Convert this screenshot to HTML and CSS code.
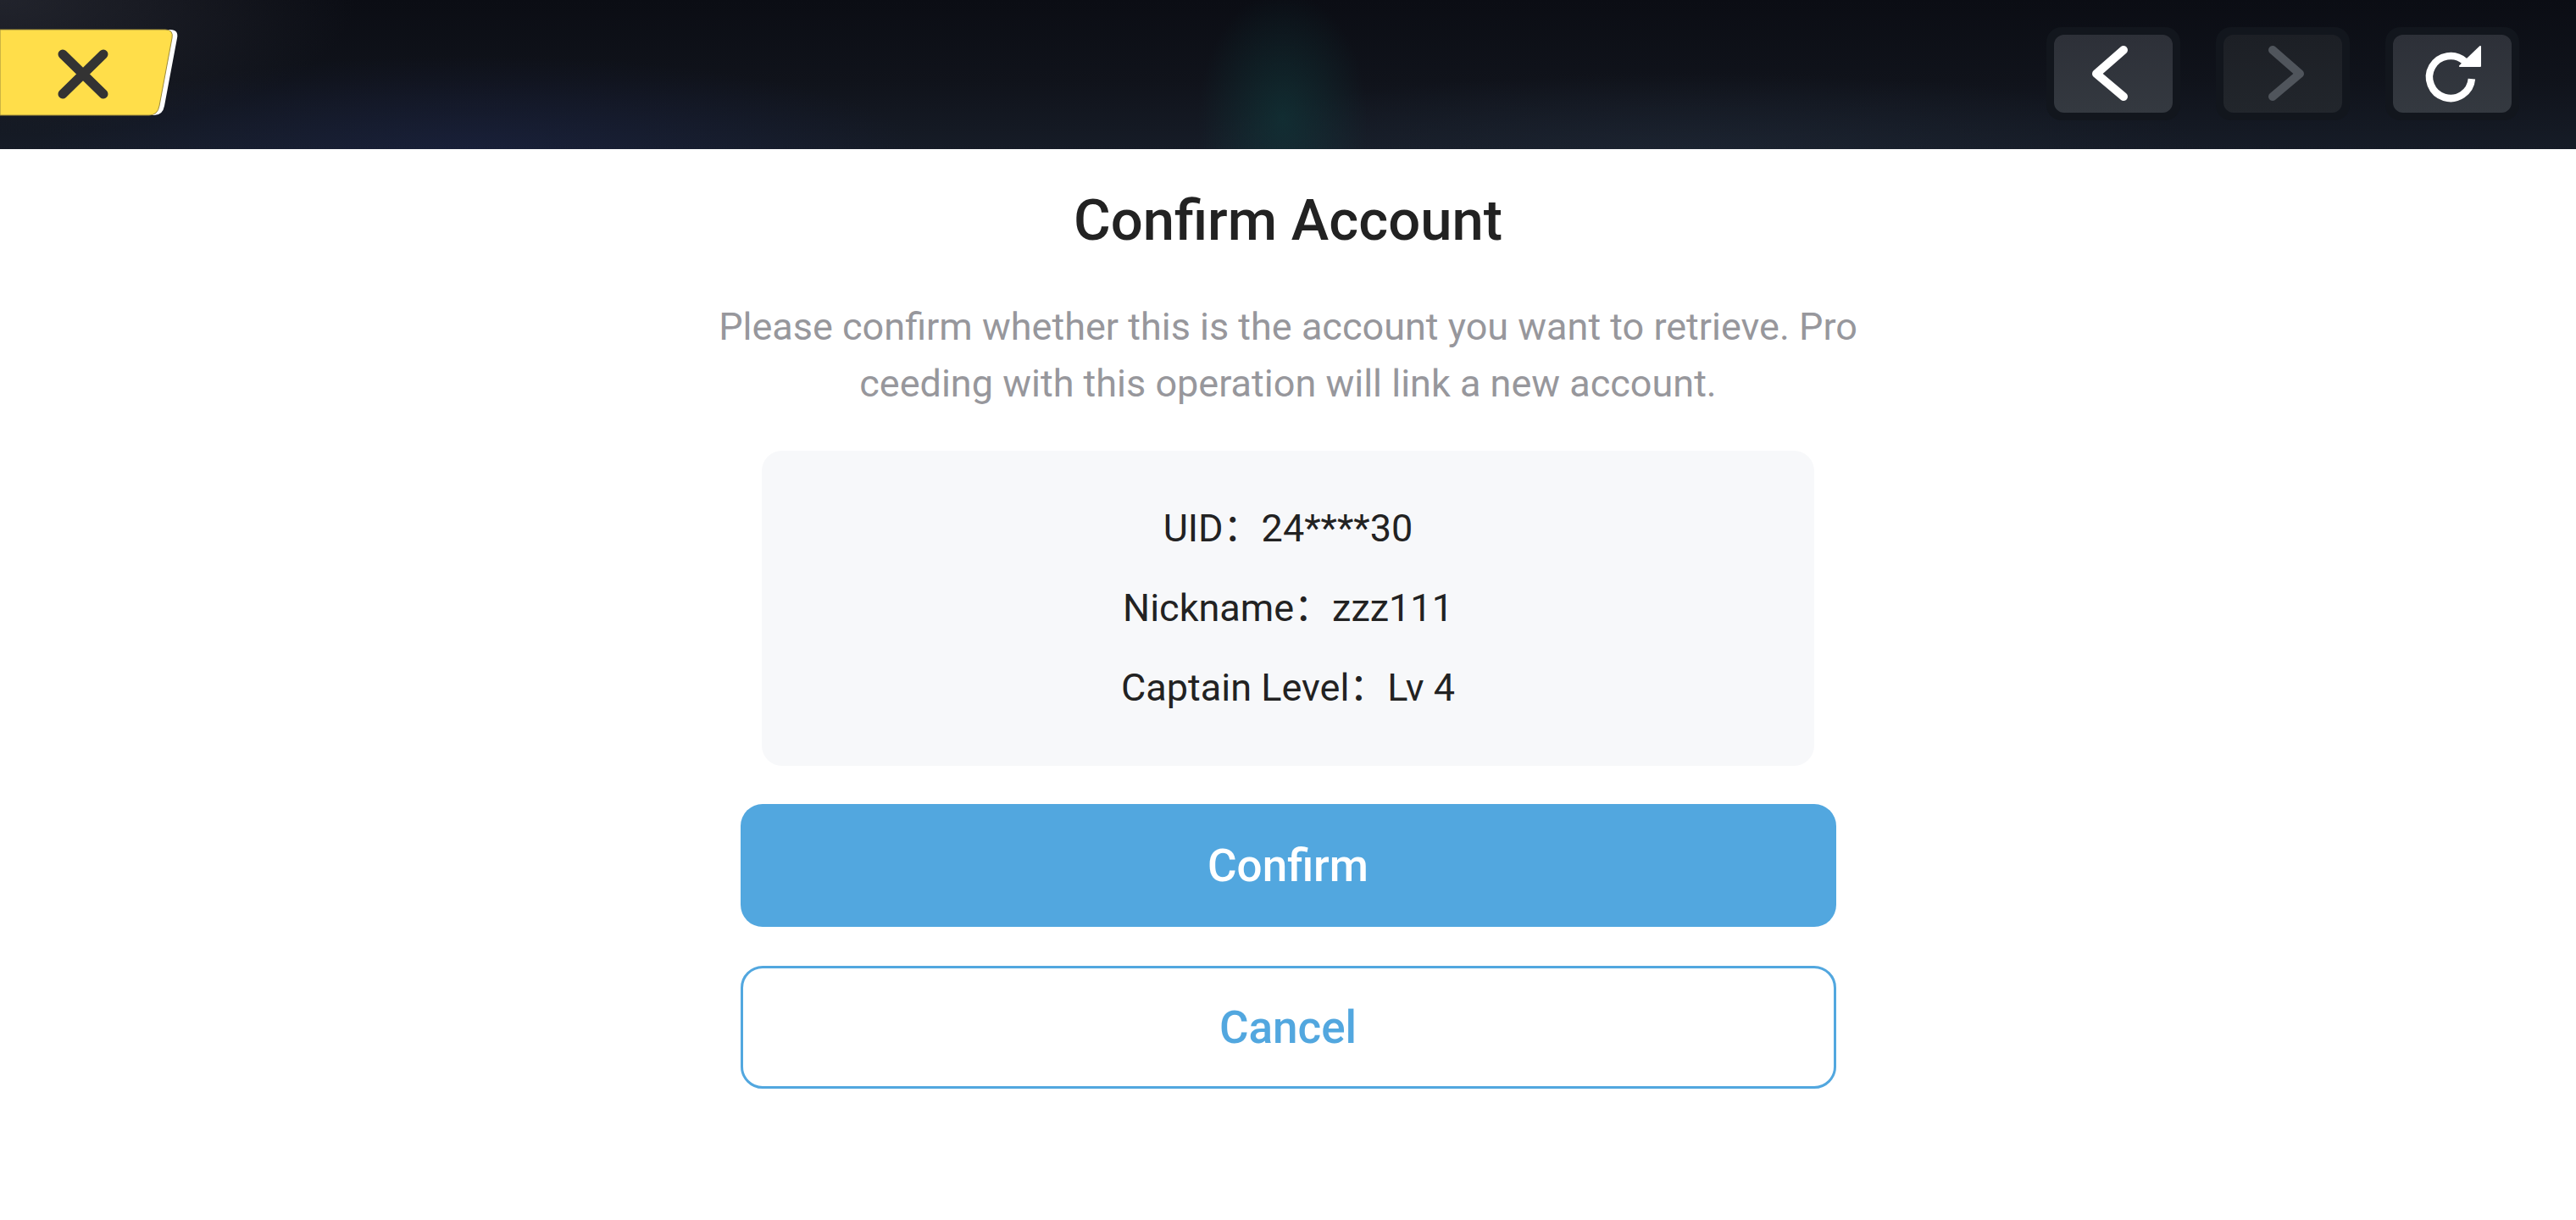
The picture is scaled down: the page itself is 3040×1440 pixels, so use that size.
FILE: index.html
```html
<!DOCTYPE html>
<html lang="en">
<head>
<meta charset="utf-8">
<title>Confirm Account</title>
<link rel="stylesheet" href="styles.css">
</head>
<body>
<header class="topbar">
  <button class="close-btn" aria-label="Close">
    <svg width="216" height="104" viewBox="0 0 216 104">
      <path d="M0 1 H201 Q211 1 209 11 L194 91 Q192 102 182 102 H0 Z" fill="#ffffff"/>
      <path d="M0 1 H195 Q205 1 203 11 L188 91 Q186 102 176 102 H0 Z" fill="#ffde4a" stroke="#9c8a3a" stroke-width="1"/>
      <path d="M74 30 L122 77 M122 30 L74 77" stroke="#333333" stroke-width="11" stroke-linecap="round"/>
    </svg>
  </button>
  <nav class="nav">
    <div class="nav-ring"><div class="nav-btn">
      <svg width="140" height="92" viewBox="0 0 140 92"><path d="M82 18 L50 46 L82 73" fill="none" stroke="#ffffff" stroke-width="10" stroke-linecap="round" stroke-linejoin="round"/></svg>
    </div></div>
    <div class="nav-ring"><div class="nav-btn dim">
      <svg width="140" height="92" viewBox="0 0 140 92"><path d="M58 18 L90 46 L58 73" fill="none" stroke="#50555c" stroke-width="10" stroke-linecap="round" stroke-linejoin="round"/></svg>
    </div></div>
    <div class="nav-ring"><div class="nav-btn">
      <svg width="140" height="92" viewBox="0 0 140 92">
        <path d="M84.7 31.4 A25 25 0 1 0 92.9 52.2" fill="none" stroke="#ffffff" stroke-width="8.5"/>
        <path d="M79 37 L103 37 L103 14 Z" fill="#ffffff" stroke="#ffffff" stroke-width="2" stroke-linejoin="round"/>
      </svg>
    </div></div>
  </nav>
</header>
<main class="main">
  <h1 class="title">Confirm Account</h1>
  <p class="desc">Please confirm whether this is the account you want to retrieve. Proceeding with this operation will link a new account.</p>
  <section class="card">
    <div class="row">UID：24****30</div>
    <div class="row">Nickname：zzz111</div>
    <div class="row">Captain Level：Lv 4</div>
  </section>
  <button class="btn primary">Confirm</button>
  <button class="btn outline">Cancel</button>
</main>
</body>
</html>
```
FILE: styles.css
```css
* { box-sizing: border-box; }
html, body { margin: 0; padding: 0; background: #ffffff; }
body {
  font-family: Roboto, "Noto Sans CJK SC", "Liberation Sans", sans-serif;
  color: #222222;
}
.topbar {
  height: 176px;
  display: flex;
  justify-content: space-between;
  align-items: flex-start;
  background:
    radial-gradient(ellipse 100px 150px at 1514px 140px, rgba(16, 58, 60, 0.6), rgba(16, 58, 60, 0) 100%),
    radial-gradient(ellipse 420px 160px at 0px 0px, rgba(52, 54, 64, 0.55), rgba(52, 54, 64, 0) 100%),
    radial-gradient(ellipse 520px 110px at 560px 176px, rgba(30, 40, 90, 0.35), rgba(30, 40, 90, 0) 100%),
    radial-gradient(ellipse 600px 90px at 2000px 176px, rgba(35, 45, 60, 0.45), rgba(35, 45, 60, 0) 100%),
    linear-gradient(180deg, #0b0d14 0%, #10131b 55%, #161c27 100%);
}
.close-btn {
  margin-top: 34px;
  padding: 0;
  border: 0;
  background: none;
  width: 216px;
  height: 104px;
  display: block;
}
.close-btn svg { display: block; }
.nav {
  display: flex;
  gap: 42px;
  margin-top: 32px;
  margin-right: 67px;
}
.nav-ring {
  padding: 9px;
  border-radius: 18px;
  background: #12161d;
}
.nav-btn {
  width: 140px;
  height: 92px;
  border-radius: 12px;
  background: linear-gradient(180deg, #2d3038 0%, #343940 100%);
}
.nav-btn.dim {
  background: linear-gradient(180deg, #1c1f25 0%, #22262c 100%);
}
.nav-btn svg { display: block; }
.main {
  display: flex;
  flex-direction: column;
  align-items: center;
  padding-top: 47px;
}
.title {
  margin: 0;
  font-size: 67px;
  line-height: 74px;
  font-weight: 500;
  color: #222222;
}
.desc {
  margin: 55px 0 0;
  width: 1352px;
  font-size: 45px;
  line-height: 67px;
  color: #97979c;
  text-align: center;
  word-break: break-all;
}
.card {
  margin-top: 46px;
  width: 1242px;
  padding: 45px 0;
  border-radius: 24px;
  background: #f7f8fa;
  display: flex;
  flex-direction: column;
  align-items: center;
}
.row {
  font-size: 45px;
  line-height: 94px;
  color: #222222;
}
.btn {
  width: 1293px;
  height: 145px;
  border-radius: 26px;
  font-family: Roboto, "Liberation Sans", sans-serif;
  font-size: 53px;
  font-weight: 500;
  display: flex;
  align-items: center;
  justify-content: center;
  padding: 0;
}
.btn.primary {
  margin-top: 45px;
  background: #52a7df;
  color: #ffffff;
  border: 0;
}
.btn.outline {
  margin-top: 46px;
  background: #ffffff;
  color: #52a7df;
  border: 3px solid #52a7df;
}
```
